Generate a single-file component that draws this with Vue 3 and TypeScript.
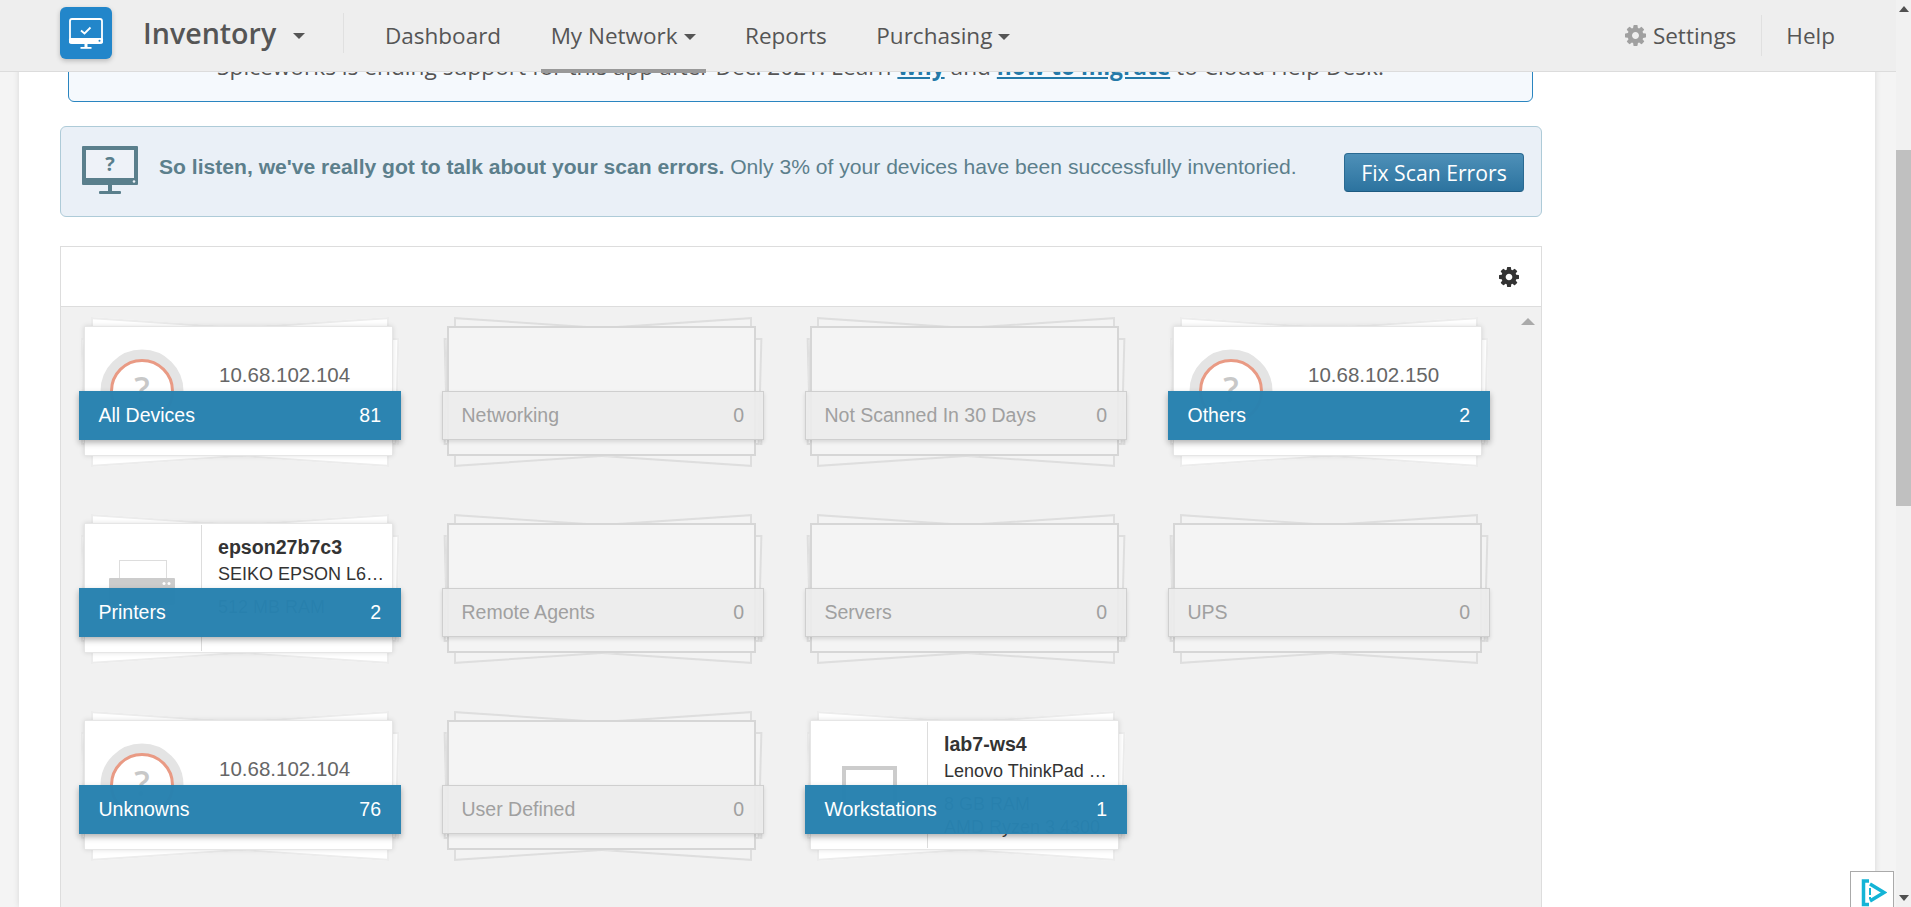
<template>
  <div class="page">
    <header class="topbar">
      <div class="logo">
        <svg width="52" height="52" viewBox="0 0 52 52">
          <rect x="10" y="12" width="32" height="24" rx="2" fill="none" stroke="#fff" stroke-width="1.8" />
          <rect x="9" y="31" width="34" height="5.5" rx="1.5" fill="#fff" />
          <circle cx="39.5" cy="33.7" r="1" fill="#2286ca" />
          <rect x="24.5" y="36" width="3" height="4.5" fill="#fff" />
          <rect x="20.5" y="40" width="11" height="1.8" fill="#fff" />
          <path d="M21 23.5l3.5 3 6-6" fill="none" stroke="#fff" stroke-width="1.8" />
        </svg>
      </div>
      <div class="brand">Inventory <i class="caret caret-big"></i></div>
      <nav class="nav">
        <a v-for="item in navItems" :key="item.label" class="nav-item" :class="{ active: item.active }">
          {{ item.label }}<i v-if="item.menu" class="caret"></i>
        </a>
      </nav>
      <div class="nav-right">
        <a class="settings">
          <svg class="gear" width="21" height="21" viewBox="0 0 1536 1536"><path :d="cogPath" fill="#a0a0a0" /></svg>
          Settings
        </a>
        <a class="help">Help</a>
      </div>
    </header>

    <main class="content">
      <div class="notice">
        Spiceworks is ending support for this app after Dec. 2021. Learn <a>why</a> and <a>how to migrate</a> to Cloud Help Desk.
      </div>

      <div class="alert">
        <svg class="alert-icon" width="56" height="48" viewBox="0 0 56 48">
          <rect x="0" y="0" width="56" height="39" rx="1" fill="#5a7f8c" />
          <rect x="4" y="4" width="48" height="28" fill="#eef2f8" />
          <circle cx="52" cy="35.5" r="1.3" fill="#eef2f8" />
          <rect x="26" y="39" width="4" height="7" fill="#5a7f8c" />
          <rect x="17" y="45" width="22" height="3" rx="1" fill="#5a7f8c" />
          <text x="28" y="25" text-anchor="middle" class="alert-q">?</text>
        </svg>
        <p class="alert-text">
          <b>So listen, we've really got to talk about your scan errors.</b> Only 3% of your devices have been successfully inventoried.
        </p>
        <button class="fix-btn">Fix Scan Errors</button>
      </div>

      <section class="panel">
        <div class="panel-head">
          <svg width="20" height="20" viewBox="0 0 1536 1536"><path :d="cogPath" fill="#333" /></svg>
        </div>
        <div class="panel-body">
          <i class="panel-arrow"></i>
          <div class="tiles">
            <div v-for="tile in tiles" :key="tile.name" class="tile" :class="{ empty: tile.count === 0 }">
              <span class="sheet sheet-a"></span>
              <span class="sheet sheet-b"></span>
              <span class="sheet sheet-c"></span>
              <span class="sheet sheet-d"></span>
              <div class="card">
                <template v-if="tile.ip">
                  <svg class="gauge" width="84" height="84" viewBox="0 0 84 84">
                    <circle cx="42" cy="42" r="36" fill="none" stroke="#e4e4e4" stroke-width="11" />
                    <circle cx="42" cy="42" r="30.5" fill="#fff" stroke="#e99a84" stroke-width="3" />
                    <text x="42" y="53" text-anchor="middle" class="gauge-q">?</text>
                  </svg>
                  <div class="ip">{{ tile.ip }}</div>
                </template>
                <template v-else-if="tile.host">
                  <div class="thumb">
                    <svg v-if="tile.kind === 'printer'" width="68" height="48" viewBox="0 0 68 48">
                      <rect x="10.5" y="0.5" width="47" height="19" fill="#fff" stroke="#ddd" />
                      <rect x="0" y="18" width="66" height="27" rx="1" fill="#ccc" />
                      <circle cx="55" cy="23.5" r="1.5" fill="#fff" />
                      <circle cx="60" cy="23.5" r="1.5" fill="#fff" />
                    </svg>
                    <div v-else class="screen"></div>
                  </div>
                  <div class="info">
                    <div class="host">{{ tile.host }}</div>
                    <div class="line model">{{ tile.model }}</div>
                    <div v-for="spec in tile.specs" :key="spec" class="line spec">{{ spec }}</div>
                  </div>
                </template>
              </div>
              <div class="band">
                <span>{{ tile.name }}</span>
                <span>{{ tile.count }}</span>
              </div>
            </div>
          </div>
        </div>
      </section>
    </main>

    <div class="scrollbar">
      <i class="sb-up"></i>
      <div class="sb-thumb"></div>
      <i class="sb-down"></i>
    </div>

    <div class="corner-badge">
      <svg width="26" height="28" viewBox="0 0 26 28">
        <path d="M8 2H2.5v23.5H8" fill="none" stroke="#14b4d6" stroke-width="3.5" />
        <path d="M9 5l14 8.5L9 22" fill="none" stroke="#14b4d6" stroke-width="3.5" />
        <path d="M9 9v7M9 18v2" fill="none" stroke="#14b4d6" stroke-width="2" />
      </svg>
    </div>
  </div>
</template>

<script setup lang="ts">
interface NavItem {
  label: string;
  menu?: boolean;
  active?: boolean;
}

interface Tile {
  name: string;
  count: number;
  ip?: string;
  host?: string;
  model?: string;
  specs?: string[];
  kind?: 'printer' | 'workstation';
}

const cogPath =
  'M1024 768q0-106-75-181t-181-75-181 75-75 181 75 181 181 75 181-75 75-181zm512-109v222q0 12-8 23t-20 13l-185 28q-19 54-39 91 35 50 107 138 10 12 10 25t-9 23q-27 37-99 108t-94 71q-12 0-26-9l-138-108q-44 23-91 38-16 136-29 186-7 28-36 28h-222q-14 0-24.5-8.5t-11.5-21.5l-28-184q-49-16-90-37l-141 107q-10 9-25 9-14 0-25-11-126-114-165-168-7-10-7-23 0-12 8-23 15-21 51-66.5t54-70.5q-27-50-41-99l-183-27q-13-2-21-12.5t-8-23.5v-222q0-12 8-23t19-13l186-28q14-46 39-92-40-57-107-138-10-12-10-24 0-10 9-23 26-36 98.5-107.5t94.5-71.5q13 0 26 10l138 107q44-23 91-38 16-136 29-186 7-28 36-28h222q14 0 24.5 8.5t11.5 21.5l28 184q49 16 90 37l142-107q9-9 24-9 13 0 25 10 129 119 165 170 7 8 7 22 0 12-8 23-15 21-51 66.5t-54 70.5q26 50 41 98l183 28q13 2 21 12.5t8 23.5z';

const navItems: NavItem[] = [
  { label: 'Dashboard' },
  { label: 'My Network', menu: true, active: true },
  { label: 'Reports' },
  { label: 'Purchasing', menu: true }
];

const tiles: Tile[] = [
  { name: 'All Devices', count: 81, ip: '10.68.102.104' },
  { name: 'Networking', count: 0 },
  { name: 'Not Scanned In 30 Days', count: 0 },
  { name: 'Others', count: 2, ip: '10.68.102.150' },
  { name: 'Printers', count: 2, host: 'epson27b7c3', model: 'SEIKO EPSON L6190 Series', specs: ['512 MB RAM'], kind: 'printer' },
  { name: 'Remote Agents', count: 0 },
  { name: 'Servers', count: 0 },
  { name: 'UPS', count: 0 },
  { name: 'Unknowns', count: 76, ip: '10.68.102.104' },
  { name: 'User Defined', count: 0 },
  { name: 'Workstations', count: 1, host: 'lab7-ws4', model: 'Lenovo ThinkPad E14 Gen 2', specs: ['8 GB RAM', 'AMD Ryzen 3 4300'], kind: 'workstation' }
];
</script>

<style>
html,
body {
  margin: 0;
  overflow: hidden;
}
</style>

<style scoped>
.page {
  position: relative;
  display: flex;
  height: 907px;
  overflow: hidden;
  background: #f4f4f4;
  font-family: "Liberation Sans", Arial, sans-serif;
}

/* Top bar */
.topbar {
  position: absolute;
  top: 0;
  left: 0;
  z-index: 5;
  display: flex;
  align-items: center;
  box-sizing: border-box;
  width: 1896px;
  height: 72px;
  padding: 0 61px 0 60px;
  background: #eee;
  border-bottom: 1px solid #dcdcdc;
  font-family: "Open Sans", sans-serif;
  color: #555;
}

.logo {
  width: 52px;
  height: 52px;
  margin-bottom: 6px;
  border-radius: 6px;
  background: #2286ca;
  box-shadow: 0 2px 5px rgba(0, 0, 0, 0.22);
}

.brand {
  box-sizing: border-box;
  width: 201px;
  margin: 0 0 5px 31px;
  padding: 8px 0;
  border-right: 1px solid #e0e0e0;
  font-size: 28.6px;
  font-weight: 600;
  line-height: 24px;
  white-space: nowrap;
}

.caret {
  display: inline-block;
  margin-left: 6px;
  vertical-align: middle;
  border-top: 6px solid #555;
  border-left: 6px solid transparent;
  border-right: 6px solid transparent;
}

.caret-big {
  margin-left: 9px;
}

.nav {
  display: flex;
  gap: 29.5px;
  margin-left: 31px;
}

.nav-item {
  position: relative;
  padding: 0 10px;
  font-size: 22.5px;
  line-height: 30px;
  white-space: nowrap;
}

.nav-item.active::after {
  content: "";
  position: absolute;
  left: 0;
  right: 0;
  top: 48px;
  height: 4px;
  background: #999;
}

.nav-right {
  display: flex;
  align-items: center;
  margin-left: auto;
  font-size: 22.5px;
}

.settings {
  display: flex;
  align-items: center;
  gap: 7px;
  padding: 5px 25px 5px 0;
  border-right: 1px solid #e0e0e0;
}

.help {
  padding-left: 24px;
}

/* Main column */
.content {
  box-sizing: border-box;
  width: 1856px;
  margin-left: 19px;
  padding: 0 333px 0 41px;
  background: #fff;
  box-shadow: 0 0 6px rgba(0, 0, 0, 0.12);
  flex: none;
}

.notice {
  box-sizing: border-box;
  height: 102px;
  margin: 0 9px 0 8px;
  padding-top: 52px;
  background: #f5f9fd;
  border: 1px solid #2a85c0;
  border-radius: 6px;
  font-family: "Open Sans", sans-serif;
  font-size: 22.7px;
  line-height: 27px;
  color: #555;
  text-align: center;
  white-space: nowrap;
}

.notice a {
  font-weight: 700;
  color: #2479a8;
  text-decoration: underline;
}

.alert {
  display: flex;
  align-items: center;
  box-sizing: border-box;
  height: 91px;
  margin-top: 24px;
  padding: 0 17px 0 21px;
  background: #eaf0f7;
  border: 1px solid #aecbd8;
  border-radius: 6px;
}

.alert-icon {
  flex: none;
  margin-top: -4px;
}

.alert-q {
  font-family: "Open Sans", sans-serif;
  font-size: 20px;
  font-weight: 700;
  fill: #5a7f8c;
}

.alert-text {
  flex: 1;
  margin: -10px 0 0 21px;
  font-size: 21.1px;
  color: #5c7f8c;
  white-space: nowrap;
}

.fix-btn {
  flex: none;
  width: 180px;
  height: 39px;
  margin-top: 1px;
  padding: 0;
  background: linear-gradient(#4e90b8, #2c739f);
  border: 1px solid #2a6a92;
  border-bottom-color: #1d5a80;
  border-radius: 4px;
  font-family: "Open Sans", sans-serif;
  font-size: 21.2px;
  color: #fff;
}

/* Device panel */
.panel {
  margin-top: 29px;
  border: 1px solid #ddd;
  background: #f1f1f1;
}

.panel-head {
  display: flex;
  align-items: center;
  justify-content: flex-end;
  box-sizing: border-box;
  height: 60px;
  padding: 0 22px 0 0;
  background: #fff;
  border-bottom: 1px solid #ddd;
}

.panel-body {
  position: relative;
  padding: 10px 0 100px 18px;
}

.panel-arrow {
  position: absolute;
  top: 11px;
  right: 6px;
  border-bottom: 7px solid #aaa;
  border-left: 7px solid transparent;
  border-right: 7px solid transparent;
}

.tiles {
  display: grid;
  grid-template-columns: repeat(4, 322px);
  column-gap: 41px;
  row-gap: 47px;
}

.tile {
  position: relative;
  height: 150px;
  padding: 9px 8px 11px 5px;
  box-sizing: border-box;
}

.sheet {
  position: absolute;
  box-sizing: border-box;
  background: #fff;
  border: 2px solid #ececec;
}

.sheet-a,
.sheet-b {
  left: 12px;
  top: 10px;
  width: 298px;
  height: 130px;
}

.sheet-a {
  transform: skewY(3.8deg);
}

.sheet-b {
  transform: skewY(-3.8deg);
}

.sheet-c,
.sheet-d {
  left: 3px;
  top: 21px;
  width: 316px;
  height: 107px;
}

.sheet-c {
  transform: skewX(1.5deg);
}

.sheet-d {
  transform: skewX(-1.5deg);
}

.card {
  position: relative;
  display: flex;
  box-sizing: border-box;
  width: 309px;
  height: 130px;
  overflow: hidden;
  background: #fff;
  border: 1px solid #e6e6e6;
  box-shadow: 0 0 5px rgba(0, 0, 0, 0.12);
}

.gauge {
  flex: none;
  margin: 22px 0 0 15px;
}

.gauge-q {
  font-family: "Open Sans", sans-serif;
  font-size: 34px;
  font-weight: 600;
  fill: #c8c8c8;
}

.ip {
  margin: 36px 0 0 35px;
  font-size: 20.5px;
  line-height: 24px;
  color: #666;
}

.thumb {
  flex: none;
  display: flex;
  justify-content: center;
  box-sizing: border-box;
  width: 117px;
  height: 126px;
  margin-top: 1px;
  padding-top: 35px;
  border-right: 1px solid #ddd;
}

.screen {
  box-sizing: border-box;
  width: 55px;
  height: 44px;
  margin-top: 9px;
  border: 4px solid #ccc;
  background: #fff;
}

.info {
  flex: 1;
  min-width: 0;
  padding: 11px 5px 0 16px;
  font-size: 18px;
  line-height: 23px;
  color: #333;
}

.host {
  font-weight: 700;
  font-size: 19.6px;
  line-height: 24px;
  margin-bottom: 4px;
}

.line {
  overflow: hidden;
  text-overflow: ellipsis;
  white-space: nowrap;
}

.model {
  margin-bottom: 10px;
}

.spec {
  color: #444;
}

.band {
  position: absolute;
  top: 74px;
  left: 0;
  display: flex;
  align-items: center;
  justify-content: space-between;
  box-sizing: border-box;
  width: 322px;
  height: 49px;
  padding: 0 20px 0 19.5px;
  background: rgba(40, 130, 175, 0.98);
  box-shadow: 0 3px 6px rgba(0, 0, 0, 0.3);
  font-size: 19.5px;
  color: #fff;
}

/* Tiles with no devices */
.empty .sheet {
  background: #f3f3f3;
  border-color: #dedede;
}

.empty .card {
  background: #f4f4f4;
  border: 2px solid #d6d6d6;
  box-shadow: none;
}

.empty .band {
  background: rgba(236, 236, 236, 0.92);
  border: 1px solid #cfcfcf;
  box-shadow: 0 2px 4px rgba(0, 0, 0, 0.12);
  padding: 0 19px 0 18.5px;
  color: #a0a0a0;
}

/* Fake window scrollbar */
.scrollbar {
  position: relative;
  flex: none;
  width: 15px;
  margin-left: 21px;
  background: #f1f1f1;
}

.sb-thumb {
  position: absolute;
  top: 150px;
  left: 0;
  width: 15px;
  height: 356px;
  background: #c0c0c0;
}

.sb-up,
.sb-down {
  position: absolute;
  left: 3px;
  border-left: 5px solid transparent;
  border-right: 5px solid transparent;
}

.sb-up {
  top: 6px;
  border-bottom: 6px solid #505050;
}

.sb-down {
  bottom: 6px;
  border-top: 6px solid #505050;
}

.corner-badge {
  position: absolute;
  top: 871px;
  left: 1850px;
  box-sizing: border-box;
  width: 44px;
  height: 36px;
  padding: 7px 0 0 10px;
  background: #fff;
  border: 1px solid #aaa;
  border-bottom: 0;
}
</style>
